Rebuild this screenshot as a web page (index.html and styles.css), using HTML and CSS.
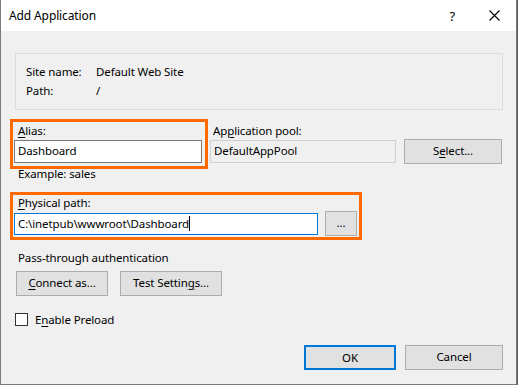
FILE: index.html
```html
<!DOCTYPE html>
<html>
<head>
<meta charset="utf-8">
<link rel="stylesheet" href="styles.css">
</head>
<body>
<div class="window">
  <div class="titlebar">
    <span class="title">Add Application</span>
    <span class="help">?</span>
    <svg class="close" width="11" height="11" viewBox="0 0 11 11"><path d="M0.5 0.5 L10.5 10.5 M10.5 0.5 L0.5 10.5" stroke="#000" stroke-width="1.1" fill="none"/></svg>
  </div>
  <div class="content">
    <div class="infobox">
      <div class="inforow"><span class="ilabel">Site name:</span><span>Default Web Site</span></div>
      <div class="inforow"><span class="ilabel">Path:</span><span>/</span></div>
    </div>

    <div class="aliasrow">
      <div class="hl alias">
        <div class="label"><u>A</u>lias:</div>
        <div class="textbox">Dashboard</div>
      </div>
      <div class="pool">
        <div class="label">Ap<u>p</u>lication pool:</div>
        <div class="poolrow">
          <div class="textbox readonly">DefaultAppPool</div>
          <div class="btn select">S<u>e</u>lect...</div>
        </div>
      </div>
    </div>
    <div class="example">Example: sales</div>

    <div class="hl phys">
      <div class="label"><u>P</u>hysical path:</div>
      <div class="physrow">
        <div class="textbox focus">C:\inetpub\wwwroot\Dashboard<span class="caret"></span></div>
        <div class="btn dots">...</div>
      </div>
    </div>

    <div class="pass">Pass-through authentication</div>
    <div class="btnrow">
      <div class="btn connect"><u>C</u>onnect as...</div>
      <div class="btn test">Test Settin<u>g</u>s...</div>
    </div>

    <div class="check">
      <span class="box"></span><span>E<u>n</u>able Preload</span>
    </div>

    <div class="footer">
      <div class="btn ok">OK</div>
      <div class="btn cancel">Cancel</div>
    </div>
  </div>
</div>
</body>
</html>
```

FILE: styles.css
```css
html, body {
  margin: 0;
  padding: 0;
  background: #5a5a5a;
}
body {
  font-family: "Noto Sans", "Segoe UI", sans-serif;
  font-size: 11.5px;
  letter-spacing: -0.12px;
  color: #000;
  width: 518px;
  height: 385px;
  overflow: hidden;
}
.window {
  box-sizing: border-box;
  width: 517px;
  height: 385px;
  border-left: 1px solid #7a7a7a;
  border-right: 1px solid #7a7a7a;
  border-bottom: 1px solid #7a7a7a;
  background: #f0f0f0;
  display: flex;
  flex-direction: column;
}
.titlebar {
  height: 31px;
  background: #fff;
  display: flex;
  align-items: center;
  flex-shrink: 0;
}
.title {
  margin-left: 8px;
  flex: 1;
  font-size: 12px;
}
.help {
  margin-right: 34px;
  font-size: 13px;
}
.close {
  margin-right: 16px;
}
.content {
  flex: 1;
}
u {
  text-decoration: underline;
  text-underline-offset: 2px;
}
.infobox {
  box-sizing: border-box;
  margin: 22px 0 0 14px;
  width: 488px;
  height: 57px;
  border: 1px solid #dcdcdc;
  padding: 10px 0 0 10px;
}
.inforow {
  display: flex;
  height: 19px;
  line-height: 16px;
}
.ilabel {
  width: 70px;
}
.label {
  line-height: 17px;
  height: 17px;
}
.hl {
  box-sizing: border-box;
  border: 3px solid #ff6a00;
}
.aliasrow {
  display: flex;
  margin-top: 9px;
}
.alias {
  margin-left: 9px;
  width: 198px;
  height: 50px;
  padding: 0 2px 0 1px;
}
.alias .label {
  margin: 0 0 0 4px;
}
.textbox {
  box-sizing: border-box;
  height: 23px;
  border: 1px solid #7a7a7a;
  background: #fff;
  line-height: 20px;
  padding-left: 3px;
  white-space: nowrap;
}
.alias .textbox {
  margin-top: 1px;
  width: 188px;
}
.pool {
  margin-left: 2px;
  padding-top: 3px;
}
.pool .label {
  margin: 0 0 0 3px;
}
.poolrow {
  display: flex;
  align-items: flex-start;
  margin-top: 1px;
}
.readonly {
  width: 186px;
  background: #f0f0f0;
  border-color: #cfcfcf;
}
.btn {
  box-sizing: border-box;
  background: #e1e1e1;
  border: 1px solid #adadad;
  text-align: center;
  height: 25px;
  line-height: 22px;
}
.select {
  width: 98px;
  margin-left: 8px;
  margin-top: -1px;
}
.example {
  margin: -3px 0 0 17px;
  height: 16px;
  line-height: 16px;
}
.phys {
  margin: 10px 0 0 9px;
  width: 352px;
  height: 48px;
  padding: 0 0 0 1px;
}
.phys .label {
  margin: 0 0 0 4px;
  line-height: 15px;
  height: 15px;
}
.physrow {
  display: flex;
  align-items: flex-start;
  margin-top: 3px;
}
.focus {
  width: 304px;
  height: 22px;
  border-color: #0078d7;
  line-height: 19px;
}
.caret {
  display: inline-block;
  width: 1px;
  height: 15px;
  background: #000;
  vertical-align: -3px;
}
.dots {
  width: 32px;
  margin-left: 7px;
  margin-top: -2px;
}
.pass {
  margin: 10px 0 0 17px;
  line-height: 16px;
  height: 16px;
}
.btnrow {
  display: flex;
  margin: 5px 0 0 15px;
}
.connect {
  width: 92px;
}
.test {
  width: 102px;
  margin-left: 12px;
}
.check {
  display: flex;
  align-items: center;
  margin: 17px 0 0 14px;
  height: 13px;
}
.box {
  box-sizing: border-box;
  width: 13px;
  height: 13px;
  border: 1px solid #333;
  background: #fff;
  margin-right: 7px;
}
.footer {
  display: flex;
  margin: 19px 0 0 303px;
}
.ok {
  width: 92px;
  border: 2px solid #0078d7;
  line-height: 21px;
}
.cancel {
  width: 98px;
  margin-left: 9px;
}
```
